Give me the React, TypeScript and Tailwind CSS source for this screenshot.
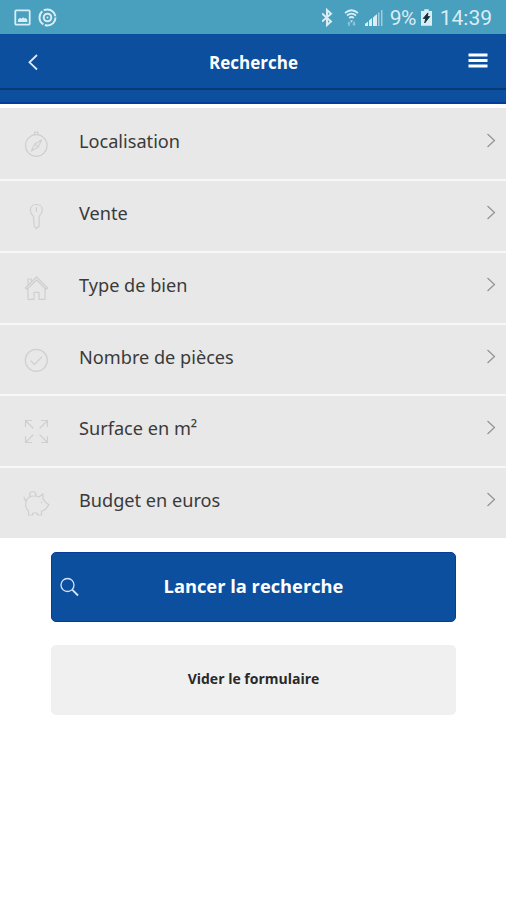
import { ReactNode } from "react";

type IconProps = {
  children: ReactNode;
};

const RowIcon = ({ children }: IconProps) => (
  <svg
    viewBox="0 0 28 28"
    className="h-7 w-7 shrink-0"
    fill="none"
    stroke="#cfcfcf"
    strokeWidth="1.2"
    strokeLinecap="round"
    strokeLinejoin="round"
  >
    {children}
  </svg>
);

const rows = [
  {
    label: "Localisation",
    icon: (
      <>
        <circle cx="14.3" cy="15.5" r="10.8" />
        <path d="M12.6 4.5V2.2h3.4v2.3M19.5 10l-3.2 7-7 4 3.5-7ZM12.8 14l3.5 3" />
      </>
    ),
  },
  {
    label: "Vente",
    icon: (
      <path d="M11.5 14.5C9.6 12.6 8.400 10.900 8.400 8.300c0-3.500 2.500-5.800 6-5.800s6 2.300 6 5.800c0 2.600-1.400 4.300-3.300 6.200v9.700l-2.700 2.300-2.200-2.300ZM14.400 5.500v4" />
    ),
  },
  {
    label: "Type de bien",
    icon: (
      <path d="M3.500 14 14.500 3 25.500 14 24 15.300 14.500 6 5 15.300ZM6 15v10.300h6v-7h5v7h6V15M6 11V5h3.300v3" />
    ),
  },
  {
    label: "Nombre de pièces",
    icon: (
      <>
        <circle cx="14.3" cy="14.3" r="11" />
        <path d="m9 15 3.500 3.500 7.200-7.300" />
      </>
    ),
  },
  {
    label: "Surface en m²",
    icon: (
      <path d="M3.500 9.500v-6h6M3.500 3.500l7.500 7.500M19.500 3.500h6v6M25.500 3.500 18 11M3.500 19.500v6h6M3.500 25.500 11 18M25.500 19.500v6h-6M25.500 25.500 18 18" />
    ),
  },
  {
    label: "Budget en euros",
    icon: (
      <path d="M8.200 7.500C7 4.500 8.300 2.500 10.700 2.500s3.700 2 3 4.300M2 8c0 2 .5 3 2.300 4M4.300 12C5.500 8.500 8.700 7 12.500 7c1.700 0 3 .4 4.500 1l4-3.300v5.300c1.200 1 1.800 2 2.400 3.200l3.600 2.500-3 4c-1.500 1.200-3 2-4.500 2.500V26h-4l-.5-2h-4l-.5 2h-4v-4C3.500 19.500 3.200 15 4.300 12ZM19.500 13v.8" />
    ),
  },
];

const StatusBar = () => (
  <div className="flex h-[34px] items-center justify-between bg-[#489fbe] px-[14px] pt-px text-[#d9edf4]">
    <svg width="44" height="20" viewBox="0 0 44 20" fill="none" stroke="currentColor" strokeWidth="1.8">
      <rect x="1.3" y="2.3" width="14.4" height="14.4" rx="1" />
      <path d="M4 14v-2.500l2-1.700 1.500 1L9 9.300l1.500 1.300 1-.8 1.800 2V14Z" fill="currentColor" stroke="none" />
      <circle cx="33.5" cy="9.500" r="8" strokeDasharray="15.2 1.55" strokeWidth="2" />
      <circle cx="33.5" cy="9.500" r="3.8" strokeWidth="2" />
      <circle cx="33.5" cy="9.500" r="1" fill="currentColor" stroke="none" />
    </svg>
    <div className="flex items-center">
      <svg width="62" height="20" viewBox="0 0 62 20" className="mr-[6px]" fill="none" stroke="currentColor">
        <path d="m0 5.500 9 8-4 3.500V2l4 3.700-9 7.800" strokeWidth="2" />
        <path d="M23 5Q29.500 -.5 36 5M25 7.500Q29.500 3.800 34 7.500M27.200 10Q29.500 8 31.800 10" strokeWidth="1.700" />
        <path d="M28 12.500 29.500 14.500 31 12.500Z" fill="currentColor" stroke="none" />
        <path d="m27 13.500-2 2h1.200V18h1.600v-2.500H29ZM32 18l-2-2.200h1.200V13.500h1.600v2.300H34Z" fill="currentColor" stroke="none" opacity=".5" />
        <path d="M43 18v-2.200l3-2V18ZM47 18v-5.500l3-2.500V18ZM51 18V9.500l4-3.500v12Z" fill="currentColor" stroke="none" />
        <path d="M56 18V4.500h1.500V18ZM59 18V2h1.500v16Z" fill="currentColor" stroke="none" opacity=".6" />
      </svg>
      <span className="mt-[2px] w-[31px] whitespace-nowrap font-['Roboto',sans-serif] text-[21px] leading-none tracking-[-0.6px]">
        9%
      </span>
      <svg width="11" height="17" viewBox="0 0 12 18" className="mr-[8px]">
        <path d="M3.500 0h5v2H12v16H0V2h3.500Z" fill="currentColor" />
        <path d="M7.500 4 2.500 10h2.700L4 15l5.500-7H7Z" fill="#102e3b" stroke="#102e3b" />
      </svg>
      <span className="mt-[2px] font-['Roboto',sans-serif] text-[21px] leading-none">14:39</span>
    </div>
  </div>
);

const Header = () => (
  <header>
    <div className="flex h-[54px] items-center justify-between bg-[#0b4f9e] pl-7 pr-[18px] text-white">
      <svg width="20" height="20" viewBox="0 0 20 20" fill="none" stroke="#dce9ff" strokeWidth="1.8">
        <path d="M9 4 1.500 11.300 9 18.500" />
      </svg>
      <h1 className="-ml-[9px] mt-[2px] text-[17px] font-bold leading-none">Recherche</h1>
      <svg width="20" height="20" viewBox="0 0 20 20" fill="currentColor">
        <path d="M.5 2.500h19v3H.5ZM.5 8h19v3H.5ZM.5 13.500h19v3H.5Z" />
      </svg>
    </div>
    <div className="h-4 border-b-2 border-t-2 border-b-[#033c9b] border-t-[#083a75] bg-[#0b4f9e]" />
  </header>
);

export default function App() {
  return (
    <main className="min-h-[900px] w-full bg-white font-['Open_Sans','Noto_Sans',sans-serif]">
      <StatusBar />
      <Header />
      <ul className="mt-1">
        {rows.map((row, i) => (
          <li
            key={row.label}
            className={`flex items-start bg-[#e8e8e8] pl-[22px] pr-[9px] ${
              i > 0 ? "h-[71.8px] border-t-2 border-[#f8f8f8] pt-[21px]" : "h-[71px] pt-[22px]"
            }`}
          >
            <RowIcon>{row.icon}</RowIcon>
            <span className="-mt-px ml-[29px] flex-1 font-['Noto_Sans','Open_Sans',sans-serif] text-[18.15px] leading-6 text-[#3a3a3a]">
              {row.label}
            </span>
            <svg
              width="12"
              height="18"
              viewBox="0 0 12 18"
              className="mt-px"
              fill="none"
              stroke="#929292"
              strokeWidth="1.2"
            >
              <path d="m2.500 3 7 6.500-7 6.500" />
            </svg>
          </li>
        ))}
      </ul>
      <div className="mx-[51px] mt-[14px] flex flex-col gap-[23px]">
        <button className="flex h-[70px] w-[405px] items-center rounded-[5px] border border-[#063d96] bg-[#0b4f9e] px-2 text-white">
          <svg width="20" height="20" viewBox="0 0 20 20" fill="none" stroke="#d5e4fb">
            <circle cx="7.5" cy="8" r="6.5" strokeWidth="1.3" />
            <path d="m12.200 12.700 5.800 5.800" strokeWidth="1.9" />
          </svg>
          <span className="-mt-[2px] flex-1 pr-5 text-center text-[18.3px] font-bold">
            Lancer la recherche
          </span>
        </button>
        <button className="h-[70px] w-[405px] rounded-[5px] bg-[#f0f0f0] pb-[2px] text-[14px] font-bold text-[#292929]">
          Vider le formulaire
        </button>
      </div>
    </main>
  );
}
